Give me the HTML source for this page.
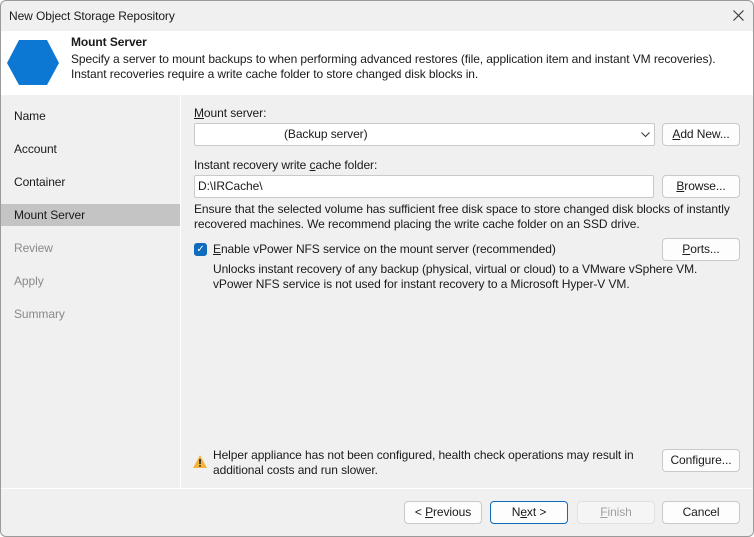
<!DOCTYPE html><html><head><style>
body{margin:0;width:754px;height:537px;overflow:hidden;font-family:"Liberation Sans",sans-serif;font-size:12px;color:#1a1a1a;background:#fff;letter-spacing:-0.08px}
.win{position:absolute;left:0;top:0;width:754px;height:537px;box-sizing:border-box;box-shadow:inset 0 0 0 1px #9a9a9a;border-radius:6px;background:#f0f0f0;overflow:hidden}
.abs{position:absolute}
.btn{position:absolute;height:21px;border:1px solid #c9c9c9;border-radius:4px;background:#fdfdfd;text-align:center;line-height:21px;font-size:12px}
.nav{position:absolute;left:14px}
u{text-decoration:underline}
</style></head><body><div class="win">
<div class="abs" style="left:9px;top:9px;font-size:12px">New Object Storage Repository</div>
<svg class="abs" style="left:733px;top:10px" width="11" height="11"><path d="M0.5 0.5L10.5 10.5M10.5 0.5L0.5 10.5" stroke="#333" stroke-width="1.1"/></svg>
<div class="abs" style="left:1px;top:31px;width:752px;height:64px;background:#fff"></div>
<svg class="abs" style="left:6px;top:40px" width="54" height="46"><polygon points="13,0 41,0 53,23 41,45 13,45 1,23" fill="#0d78d4"/></svg>
<div class="abs" style="left:71px;top:35px;font-weight:bold">Mount Server</div>
<div class="abs" style="left:71px;top:52px;line-height:15px">Specify a server to mount backups to when performing advanced restores (file, application item and instant VM recoveries).<br>Instant recoveries require a write cache folder to store changed disk blocks in.</div>
<div class="abs" style="left:180px;top:95px;width:1px;height:393px;background:#fff"></div>
<div class="abs" style="left:1px;top:204px;width:179px;height:22px;background:#c4c4c4"></div>
<div class="nav" style="top:109px">Name</div>
<div class="nav" style="top:142px">Account</div>
<div class="nav" style="top:175px">Container</div>
<div class="nav" style="top:208px">Mount Server</div>
<div class="nav" style="top:241px;color:#8a8a8a">Review</div>
<div class="nav" style="top:274px;color:#8a8a8a">Apply</div>
<div class="nav" style="top:307px;color:#8a8a8a">Summary</div>
<div class="abs" style="left:194px;top:106px"><u>M</u>ount server:</div>
<div class="abs" style="left:194px;top:123px;width:459px;height:21px;border:1px solid #c9c9c9;background:#fff;border-radius:2px"><span class="abs" style="left:89px;top:3px">(Backup server)</span><svg class="abs" style="left:446px;top:8px" width="9" height="6"><path d="M0.5 0.5L4.5 4.5L8.5 0.5" fill="none" stroke="#333"/></svg></div>
<div class="btn" style="left:662px;top:123px;width:76px"><u>A</u>dd New...</div>
<div class="abs" style="left:194px;top:158px">Instant recovery write <u>c</u>ache folder:</div>
<div class="abs" style="left:194px;top:175px;width:458px;height:21px;border:1px solid #c9c9c9;background:#fff;border-radius:2px"><span class="abs" style="left:3px;top:3px">D:\IRCache\</span></div>
<div class="btn" style="left:662px;top:175px;width:76px"><u>B</u>rowse...</div>
<div class="abs" style="left:194px;top:202px;line-height:15px">Ensure that the selected volume has sufficient free disk space to store changed disk blocks of instantly<br>recovered machines. We recommend placing the write cache folder on an SSD drive.</div>
<div class="abs" style="left:194px;top:243px;width:13px;height:13px;background:#0f6cbd;border-radius:3px;color:#fff;font-size:10px;text-align:center;line-height:13px">✓</div>
<div class="abs" style="left:213px;top:242px"><u>E</u>nable vPower NFS service on the mount server (recommended)</div>
<div class="btn" style="left:662px;top:238px;width:76px"><u>P</u>orts...</div>
<div class="abs" style="left:213px;top:262px;line-height:15px">Unlocks instant recovery of any backup (physical, virtual or cloud) to a VMware vSphere VM.<br>vPower NFS service is not used for instant recovery to a Microsoft Hyper-V VM.</div>
<svg class="abs" style="left:192px;top:454px" width="16" height="15"><polygon points="8,1 15,14 1,14" fill="#f2b43a"/><rect x="7.2" y="5" width="1.6" height="5" fill="#222"/><rect x="7.2" y="11" width="1.6" height="1.6" fill="#222"/></svg>
<div class="abs" style="left:213px;top:448px;line-height:15px">Helper appliance has not been configured, health check operations may result in<br>additional costs and run slower.</div>
<div class="btn" style="left:662px;top:449px;width:76px">Confi<u>g</u>ure...</div>
<div class="abs" style="left:1px;top:488px;width:752px;height:1px;background:#fff"></div>
<div class="btn" style="left:404px;top:501px;width:76px">&lt; <u>P</u>revious</div>
<div class="btn" style="left:490px;top:501px;width:76px;border-color:#0f6cbd">N<u>e</u>xt &gt;</div>
<div class="btn" style="left:577px;top:501px;width:76px;background:#f5f5f5;border-color:#e0e0e0;color:#a0a0a0"><u>F</u>inish</div>
<div class="btn" style="left:662px;top:501px;width:76px">Cancel</div>
</div></body></html>
